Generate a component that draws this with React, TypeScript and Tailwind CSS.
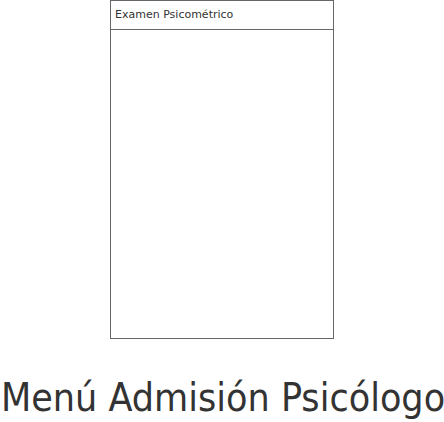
const Panel = () => (
  <div className="mx-auto flex h-[339px] w-[224px] flex-col border border-[#666666] bg-white">
    <div
      className="flex h-[29px] items-center border-b border-[#666666] px-[4px] text-[11px] text-[#333333]"
      style={{ fontFamily: '"DejaVu Sans", sans-serif' }}
    >
      Examen Psicométrico
    </div>
    <div className="flex-1" />
  </div>
);

export default function App() {
  return (
    <div
      className="h-[422px] w-[444px] overflow-hidden bg-white text-[#333333]"
      style={{ fontFamily: '"DejaVu Sans Condensed", "DejaVu Sans", sans-serif' }}
    >
      <Panel />
      <h1 className="mt-[34px] whitespace-nowrap pl-[1px] text-[39px] leading-[50px] font-normal">
        Menú Admisión Psicólogo
      </h1>
    </div>
  );
}
